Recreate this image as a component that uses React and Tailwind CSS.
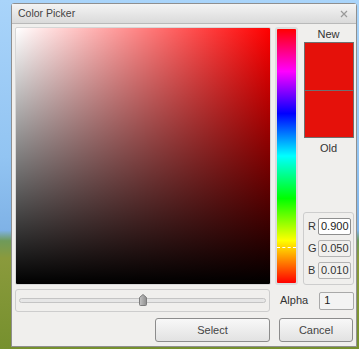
import React from 'react'

function RgbRow({ label, value, active }) {
  return (
    <div className="flex items-center gap-[2px]">
      <span className="w-[8px] text-[11px] text-[#333]">{label}</span>
      <div
        className={
          active
            ? 'flex h-[17px] w-[33px] items-center rounded-[2px] border border-[#8e8e8e] bg-white pl-[2px] text-[11px] text-[#222]'
            : 'flex h-[17px] w-[33px] items-center rounded-[2px] border border-[#b4b4b4] bg-[#f1f0ee] pl-[2px] text-[11px] text-[#333]'
        }
      >
        {value}
      </div>
    </div>
  )
}

export default function App() {
  return (
    <div className="relative h-[349px] w-[359px] overflow-hidden bg-[linear-gradient(to_bottom,#a9d4fa_0%,#92c4f2_45%,#7fb2e6_66%,#6f9a5a_69%,#8a9a3c_74%,#76902e_100%)] font-['Liberation_Sans',Arial,sans-serif]">
      <div className="absolute left-[11px] top-[3px] flex h-[344px] w-[346px] flex-col rounded-t-[3px] border border-[#8f8f8f] bg-[#f0efed]">
        {/* title bar */}
        <div className="flex h-[20px] shrink-0 items-center justify-between border-b border-[#b9b9b9] bg-[linear-gradient(to_bottom,#f4f4f4,#dadada)] pl-[6px] pr-[8px]">
          <span className="text-[10.5px] text-[#444]">Color Picker</span>
          <svg width="8" height="8" viewBox="0 0 8 8">
            <path d="M1 1L7 7M7 1L1 7" stroke="#9a9a9a" strokeWidth="1.2" />
          </svg>
        </div>

        <div className="flex flex-1 flex-col pl-[3px] pr-[2px] pt-[3px]">
          <div className="flex">
            {/* saturation / value square */}
            <div className="h-[258px] w-[256px] rounded-[2px] border border-[#d6d6d6] bg-[linear-gradient(to_bottom,rgba(0,0,0,0),#000),linear-gradient(to_right,#fff,#f00)]" />

            {/* hue bar */}
            <div className="relative ml-[4px] h-[258px] w-[23px] rounded-[3px] border-2 border-[#dcdcdc] bg-[linear-gradient(to_bottom,#f00_0%,#f0f_16.7%,#00f_33.3%,#0ff_50%,#0f0_66.7%,#ff0_83.3%,#f00_100%)]">
              <div className="absolute left-0 right-0 top-[218px] border-t border-dashed border-white" />
            </div>

            {/* right panel */}
            <div className="ml-[5px] flex w-[51px] flex-col items-center">
              <span className="mt-[1px] text-[11px] leading-[12px] text-[#333]">New</span>
              <div className="mt-[2px] flex h-[96px] w-[50px] flex-col border border-[#707070]">
                <div className="flex-1 bg-[#e5110a]" />
                <div className="h-px bg-[#707070]" />
                <div className="flex-1 bg-[#e5110a]" />
              </div>
              <span className="mt-[4px] text-[11px] leading-[12px] text-[#333]">Old</span>
              <div className="mt-auto flex h-[73px] w-[51px] flex-col justify-center gap-[5px] rounded-[3px] border border-[#cdcdcd] pl-[4px]">
                <RgbRow label="R" value="0.900" active />
                <RgbRow label="G" value="0.050" />
                <RgbRow label="B" value="0.010" />
              </div>
            </div>
          </div>

          {/* alpha row */}
          <div className="mt-[4px] flex items-center">
            <div className="flex h-[23px] w-[256px] items-center rounded-[3px] border border-[#cdcdcd] px-[3px]">
              <div className="relative h-[5px] flex-1 rounded-full border border-[#c4c4c4] bg-[#e6e6e6]">
                <svg className="absolute left-[119px] top-[-5px]" width="8" height="12" viewBox="0 0 8 12">
                  <defs>
                    <linearGradient id="th" x1="0" x2="1" y1="0" y2="0">
                      <stop offset="0" stopColor="#c4c4c4" />
                      <stop offset="1" stopColor="#8e8e8e" />
                    </linearGradient>
                  </defs>
                  <path d="M0.5 3.5L4 0.5L7.5 3.5V10.5Q7.5 11.5 6.5 11.5H1.5Q0.5 11.5 0.5 10.5Z" fill="url(#th)" stroke="#7c7c7c" />
                </svg>
              </div>
            </div>
            <span className="ml-[10px] text-[11px] text-[#333]">Alpha</span>
            <div className="ml-[11px] flex h-[18px] w-[35px] items-center rounded-[2px] border border-[#a9a9a9] bg-[#f3f3f3] pl-[4px] text-[11px] text-[#222]">
              1
            </div>
          </div>

          {/* buttons */}
          <div className="mt-[6px] flex justify-end gap-[9px] pr-[1px]">
            <button className="h-[24px] w-[115px] rounded-[3px] border border-[#8c8c8c] bg-[linear-gradient(to_bottom,#f8f8f8,#e2e2e2)] text-[11px] text-[#444]">
              Select
            </button>
            <button className="h-[24px] w-[74px] rounded-[3px] border border-[#8c8c8c] bg-[linear-gradient(to_bottom,#f8f8f8,#e2e2e2)] text-[11px] text-[#444]">
              Cancel
            </button>
          </div>
        </div>
      </div>
    </div>
  )
}
